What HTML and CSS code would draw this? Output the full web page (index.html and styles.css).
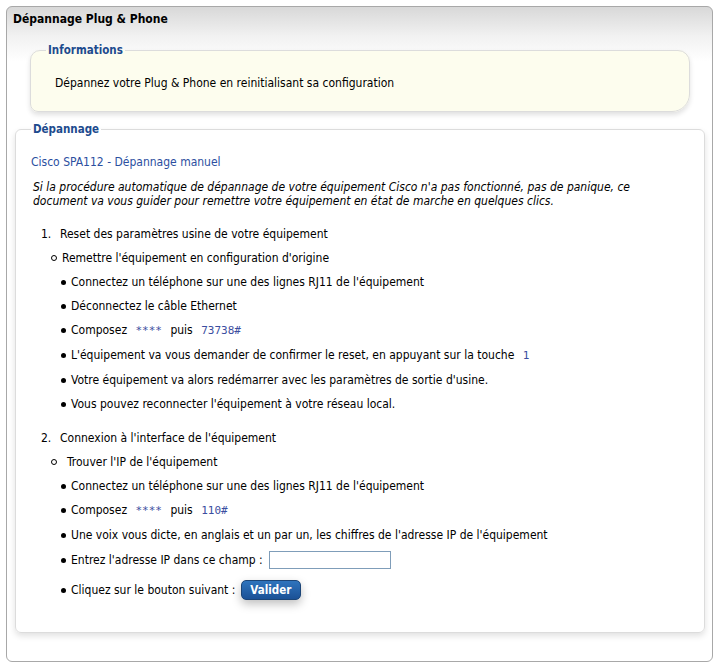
FILE: index.html
```html
<!DOCTYPE html>
<html lang="fr">
<head>
<meta charset="utf-8">
<title>Dépannage Plug &amp; Phone</title>
<link rel="stylesheet" href="styles.css">
</head>
<body>
<div class="panel">
  <div class="panel-title">Dépannage Plug &amp; Phone</div>
  <fieldset class="info">
    <legend>Informations</legend>
    <p>Dépannez votre Plug &amp; Phone en reinitialisant sa configuration</p>
  </fieldset>
  <fieldset class="dep">
    <legend>Dépannage</legend>
    <h3 class="subtitle">Cisco SPA112 - Dépannage manuel</h3>
    <p class="intro">Si la procédure automatique de dépannage de votre équipement Cisco n'a pas fonctionné, pas de panique, ce document va vous guider pour remettre votre équipement en état de marche en quelques clics.</p>
    <ol class="steps">
      <li class="step">
        <div class="step-title"><span class="num">1.</span>Reset des paramètres usine de votre équipement</div>
        <div class="sub">
          <div class="sub-title"><span class="circle"></span>Remettre l'équipement en configuration d'origine</div>
          <ul class="bullets">
            <li>Connectez un téléphone sur une des lignes RJ11 de l'équipement</li>
            <li>Déconnectez le câble Ethernet</li>
            <li>Composez <code>****</code> puis <code>73738#</code></li>
            <li>L'équipement va vous demander de confirmer le reset, en appuyant sur la touche <code>1</code></li>
            <li>Votre équipement va alors redémarrer avec les paramètres de sortie d'usine.</li>
            <li>Vous pouvez reconnecter l'équipement à votre réseau local.</li>
          </ul>
        </div>
      </li>
      <li class="step">
        <div class="step-title"><span class="num">2.</span>Connexion à l'interface de l'équipement</div>
        <div class="sub">
          <div class="sub-title wide"><span class="circle"></span>Trouver l'IP de l'équipement</div>
          <ul class="bullets">
            <li>Connectez un téléphone sur une des lignes RJ11 de l'équipement</li>
            <li>Composez <code>****</code> puis <code>110#</code></li>
            <li>Une voix vous dicte, en anglais et un par un, les chiffres de l'adresse IP de l'équipement</li>
            <li class="field-row">Entrez l'adresse IP dans ce champ : <input type="text" class="ip"></li>
            <li class="btn-row">Cliquez sur le bouton suivant : <button type="button" class="btn">Valider</button></li>
          </ul>
        </div>
      </li>
    </ol>
  </fieldset>
</div>
</body>
</html>
```

FILE: styles.css
```css
* { box-sizing: border-box; }
html, body {
  margin: 0;
  padding: 0;
  background: #fff;
}
body {
  font-family: "DejaVu Sans Condensed", "DejaVu Sans", sans-serif;
  font-size: 12px;
  color: #000;
}
.panel {
  margin: 6px 8px 0 6px;
  height: 656px;
  border: 1px solid #a8a8a8;
  border-radius: 6px;
  background: linear-gradient(#d8d8d8 0, #f2f2f2 30px, #fff 55px);
  padding: 0;
}
.panel-title {
  font-weight: bold;
  height: 25px;
  line-height: 24px;
  padding-left: 6px;
  font-size: 12px;
}
fieldset {
  margin: 0;
  min-width: 0;
}
legend {
  font-weight: bold;
  color: #1d4b8e;
  padding: 0 2px;
  font-size: 11.5px;
}
.info {
  margin: 11px 22px 0 23px;
  height: 69px;
  border: 1px solid #dcdcdc;
  border-radius: 10px 12px 18px 8px;
  background: #fdfdee;
  box-shadow: 0 3px 5px rgba(0,0,0,0.12);
  padding: 0 10px 0 15px;
}
.info p {
  margin: 19px 0 0 9px;
  line-height: 14px;
}
.dep {
  margin: 10px 7px 0 8px;
  height: 511px;
  border: 1px solid #dcdcdc;
  border-radius: 6px;
  background: #fff;
  box-shadow: 0 3px 6px rgba(0,0,0,0.12);
  padding: 0 10px 0 15px;
}
.subtitle {
  font-size: 12px;
  font-weight: normal;
  color: #2c4f9f;
  margin: 19px 0 0 0;
  line-height: 14px;
}
.intro {
  font-style: italic;
  margin: 11px 0 0 2px;
  line-height: 14px;
  max-width: 630px;
}
.steps {
  list-style: none;
  margin: 19px 0 0 0;
  padding: 0;
}
.step { margin-bottom: 20px; }
.step-title {
  display: flex;
  align-items: baseline;
  line-height: 14px;
  padding-left: 10px;
}
.num {
  width: 19px;
}
.sub { padding-left: 20px; }
.sub-title {
  display: flex;
  align-items: center;
  margin-top: 10px;
  line-height: 14px;
}
.circle {
  width: 6px;
  height: 6px;
  border: 1px solid #000;
  border-radius: 50%;
  margin-right: 5px;
  flex: none;
}
.sub-title.wide .circle { margin-right: 10px; }
.bullets {
  list-style: none;
  margin: 0;
  padding: 0 0 0 10px;
}
.bullets li {
  position: relative;
  line-height: 14px;
  margin-top: 10px;
  padding-left: 10px;
}
.bullets li::before {
  content: "";
  position: absolute;
  left: 0;
  top: 5px;
  width: 5px;
  height: 5px;
  border-radius: 50%;
  background: #000;
}
code {
  font-family: "DejaVu Sans Mono", monospace;
  font-size: 11px;
  color: #3b4ea0;
  padding: 0 5px;
}
.field-row { margin-top: 9px !important; }
.field-row::before { top: 7px !important; }
.ip {
  width: 122px;
  height: 18px;
  border: 1px solid #7f9db9;
  padding: 0 2px;
  margin: 0 0 0 3px;
  vertical-align: middle;
  font-family: inherit;
}
.btn-row { margin-top: 11px !important; }
.btn-row::before { top: 8px !important; }
.btn {
  height: 20px;
  width: 60px;
  padding: 0;
  margin: 0 0 0 2px;
  border: 1px solid #1c4577;
  border-radius: 5px;
  background: linear-gradient(#2f74bd, #1b5196);
  color: #fff;
  font-family: "DejaVu Sans Condensed", "DejaVu Sans", sans-serif;
  font-weight: bold;
  font-size: 11.5px;
  box-shadow: 0 4px 10px rgba(0,0,0,0.25);
  vertical-align: middle;
}
```
